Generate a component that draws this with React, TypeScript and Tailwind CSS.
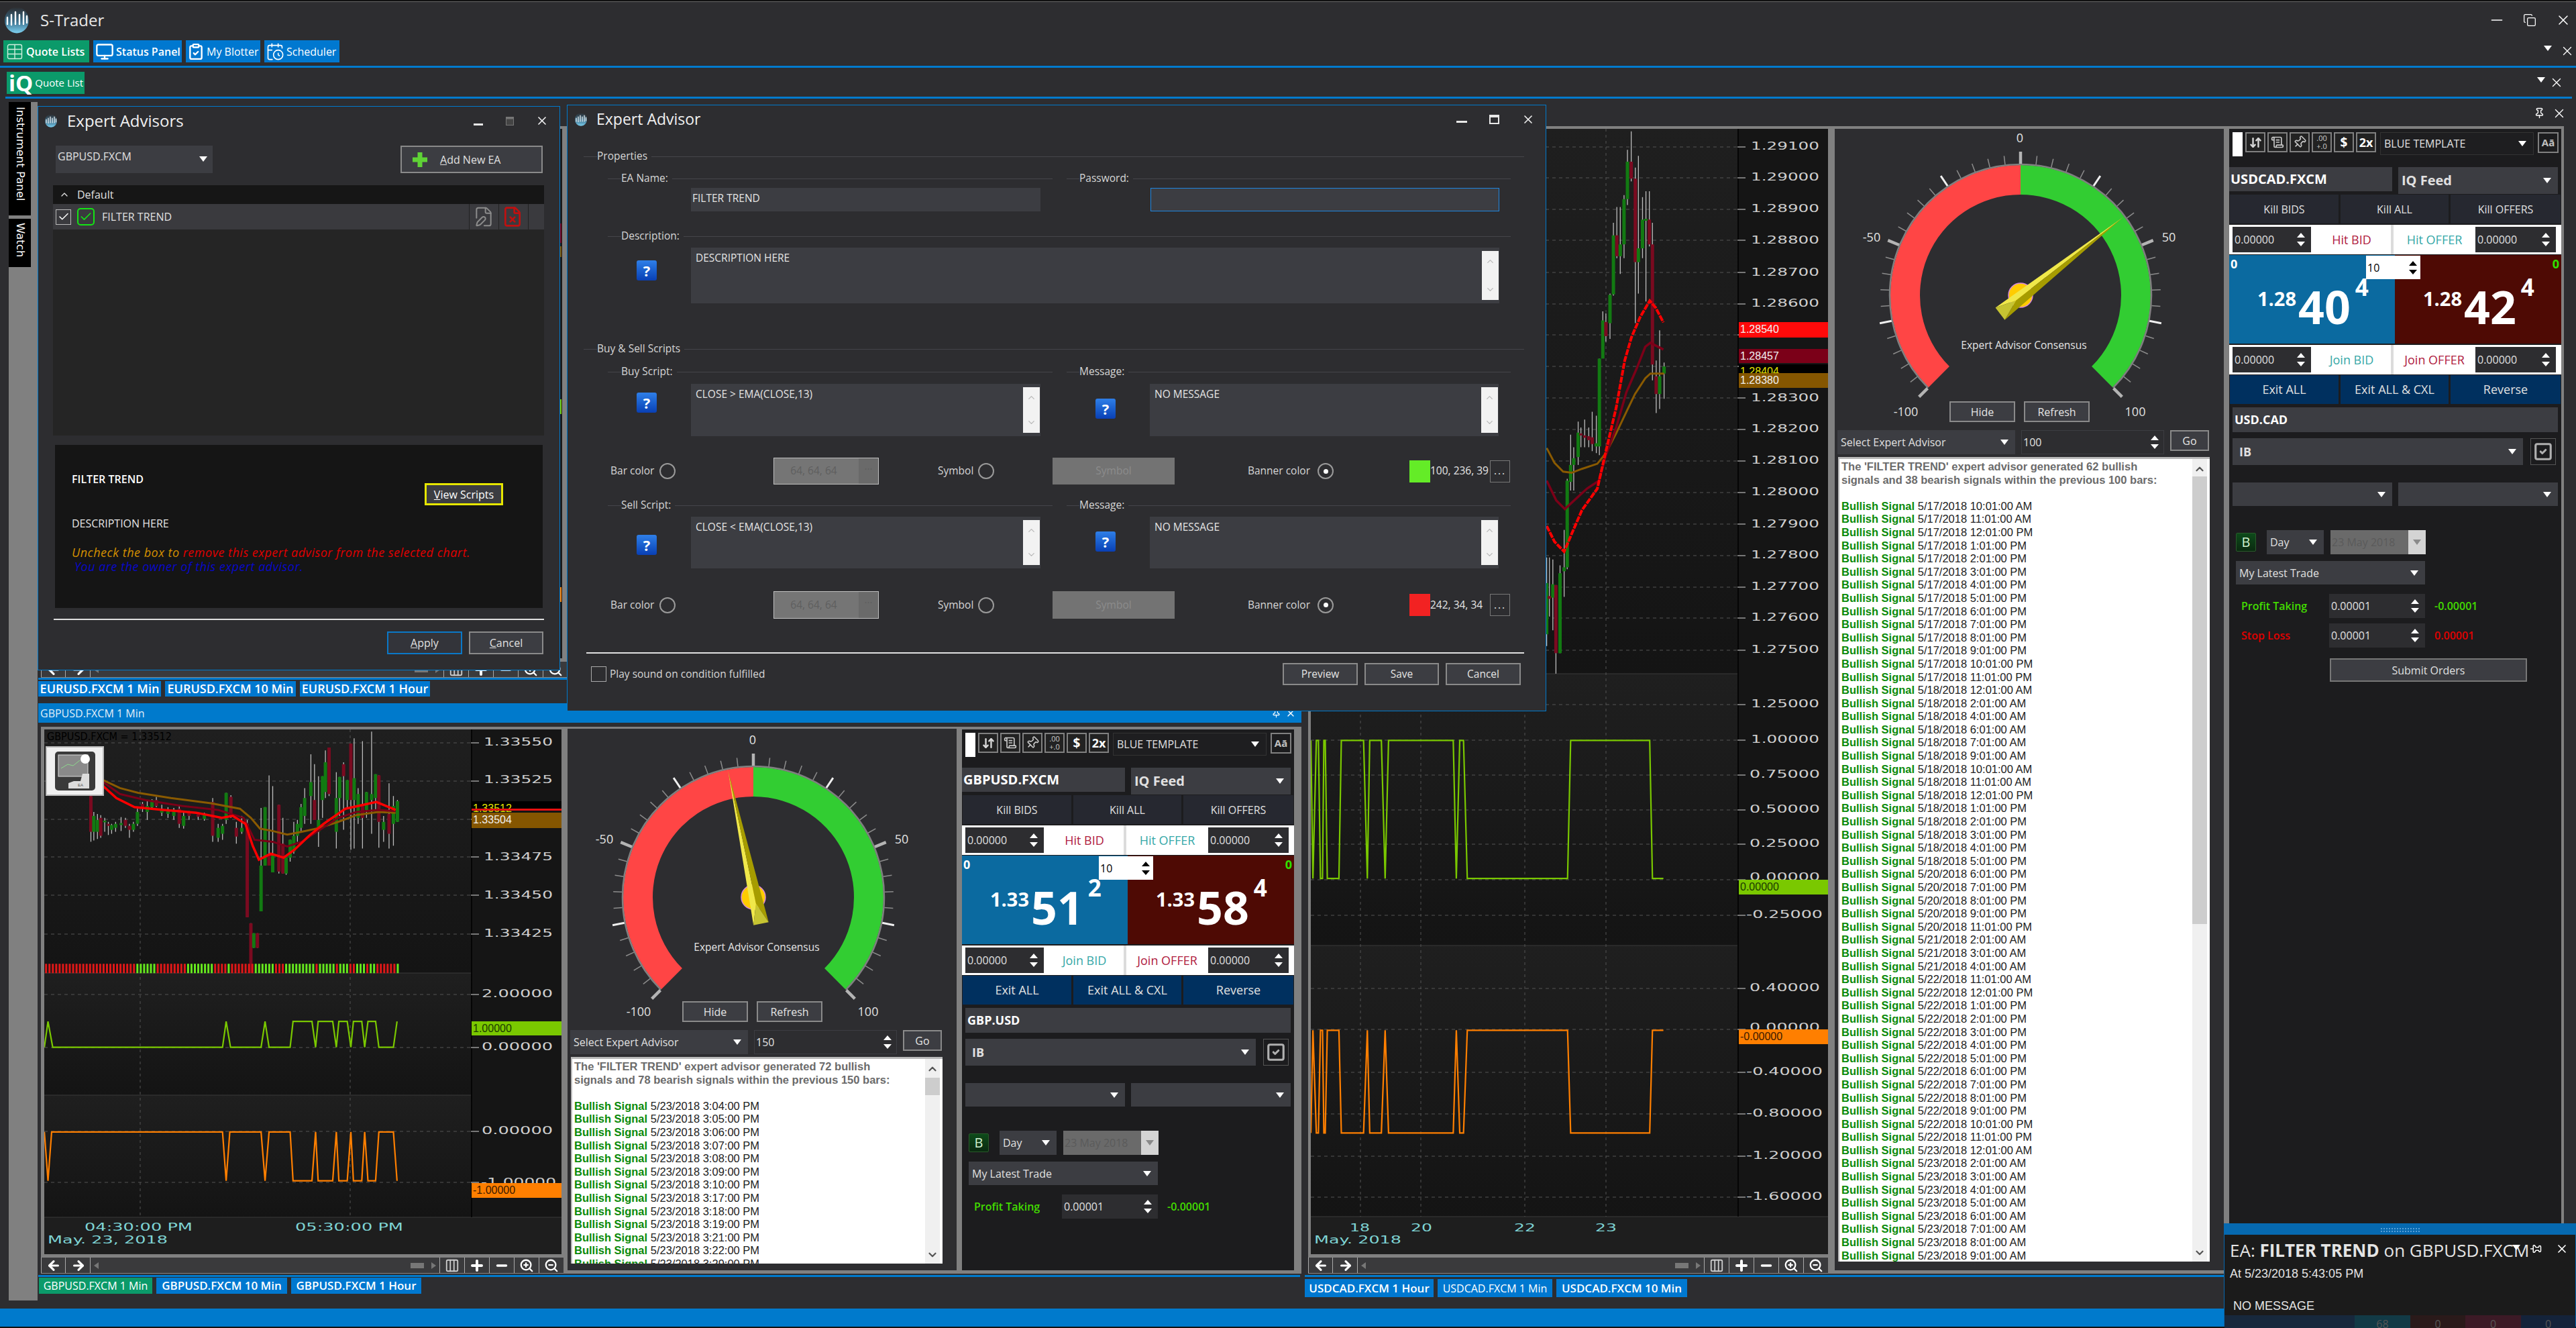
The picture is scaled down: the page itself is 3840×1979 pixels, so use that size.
import React from "react";
import { ArrowLeft, ArrowRight, Plus, Minus, ZoomIn, ZoomOut, Columns3, Table, Monitor, ClipboardCheck, CalendarClock, ArrowDownUp, ScrollText, Pin, FilePen, FileX, Check, ChevronUp, ChevronDown, X, Copy, SquareCheck } from "lucide-react";

type P = [number, number];

const Tri = ({ c = "fill-white" }: { c?: string }) => (
  <svg width="12" height="8" viewBox="0 0 12 8" className={"shrink-0 " + c}><path d="M0 0h12L6 8z" /></svg>
);

const Spin = ({ c = "fill-white" }: { c?: string }) => (
  <svg width="14" height="24" viewBox="0 0 14 24" className={"shrink-0 " + c}><path d="M7 2l6 7H1zM1 15h12l-6 7z" /></svg>
);

const Logo = ({ s }: { s: number }) => (
  <svg width={s} height={s} viewBox="0 0 40 40">
    <defs>
      <linearGradient id="lg" x1="0" y1="0" x2="0" y2="1">
        <stop offset="0" stopColor="#2d2d30" />
        <stop offset="0.55" stopColor="#3a6f8c" />
        <stop offset="1" stopColor="#7fd2f2" />
      </linearGradient>
    </defs>
    <ellipse cx="20" cy="20" rx="18" ry="19.5" fill="url(#lg)" />
    <g stroke="#fff" strokeWidth="2.4" strokeLinecap="round">
      <path d="M6 16v10M12 12v15M18 8v18M24 12v14M30 8v18M35 14v10" />
    </g>
  </svg>
);

const Tab = ({ t, c, icon }: { t: string; c: string; icon?: React.ReactNode }) => (
  <div className={"flex items-center shrink-0 text-white whitespace-nowrap " + c}>
    {icon}
    {t}
  </div>
);

const Help = ({ c }: { c: string }) => (
  <div className={"w-[30px] h-[30px] rounded-[3px] bg-gradient-to-b from-[#2f7fe8] to-[#0a3fb4] flex items-center justify-center text-white font-bold text-[22px] leading-none shrink-0 " + c}>?</div>
);

const Radio = ({ on }: { on?: boolean }) => (
  <div className="w-[24px] h-[24px] rounded-full border-2 border-[#9a9a9a] flex items-center justify-center shrink-0">
    {on ? <div className="w-[7px] h-[7px] rounded-full bg-white" /> : null}
  </div>
);

const Head = ({ t, c, lead = "w-[20px]" }: { t: string; c: string; lead?: string }) => (
  <div className={"flex items-center h-[22px] shrink-0 " + c}>
    <div className={"h-px bg-[#45454a] " + lead} />
    <span className="pr-[6px] text-[#d6d6d6] whitespace-nowrap">{t}</span>
    <div className="flex-1 h-px bg-[#45454a]" />
  </div>
);

const TextScroll = () => (
  <div className="w-[25px] bg-[#f2f2f2] flex flex-col items-center justify-between py-[8px] my-[5px] mr-[1px]">
    <ChevronUp size={15} className="text-[#b8b8b8]" />
    <ChevronDown size={15} className="text-[#b8b8b8]" />
  </div>
);

const ScriptRow = ({ t, c, h1, h2 }: { t: string; c: string; h1: string; h2: string }) => (
  <div className={"flex shrink-0 " + c}>
    <Help c={"ml-[103px] " + h1} />
    <div className="ml-[51px] w-[521px] bg-[#3c3d42] flex justify-between">
      <span className="pl-[7px] pt-[4px] text-[#e4e4e4]">{t}</span>
      <TextScroll />
    </div>
    <Help c={"ml-[82px] " + h2} />
    <div className="ml-[51px] w-[520px] bg-[#3c3d42] flex justify-between">
      <span className="pl-[7px] pt-[4px] text-[#e4e4e4]">NO MESSAGE</span>
      <TextScroll />
    </div>
  </div>
);

const BarRow = ({ c, sw, t }: { c: string; sw: string; t: string }) => (
  <div className={"flex items-center shrink-0 " + c}>
    <span className="ml-[64px] w-[68px] text-[#d6d6d6] whitespace-nowrap">Bar color</span>
    <div className="ml-[5px]"><Radio /></div>
    <div className="ml-[146px] w-[157px] h-full border border-[#c0c0c0] bg-[#757575] flex items-center text-[#5f5f5f]">
      <span className="flex-1 text-center pr-[8px]">64, 64, 64</span>
      <span className="w-[29px] h-full bg-[#6a6a6a] text-center">...</span>
    </div>
    <span className="ml-[88px] w-[56px] text-[#d6d6d6]">Symbol</span>
    <div className="ml-[4px]"><Radio /></div>
    <div className="ml-[87px] w-[182px] h-full bg-[#737373] flex items-center justify-center text-[#8c8c8c]">Symbol</div>
    <span className="ml-[79px] w-[123px] text-right text-[#d6d6d6] whitespace-nowrap">Banner color</span>
    <div className="ml-[11px]"><Radio on /></div>
    <div className={"ml-[113px] w-[31px] h-[33px] " + sw} />
    <span className="w-[89px] text-[#e4e4e4] whitespace-nowrap">{t}</span>
    <div className="w-[30px] h-[33px] border border-[#777] flex items-center justify-center text-[#e4e4e4] tracking-[2px]">...</div>
  </div>
);

const Btn = ({ c, t }: { c: string; t: string }) => (
  <div className={"bg-[#3c3d42] border-2 border-[#8a8a8a] flex items-center justify-center text-[#e4e4e4] shrink-0 " + c}>{t}</div>
);

const Dialog = () => (
  <div className="absolute left-[845px] top-[156px] w-[1460px] h-[904px] bg-[#2d2d30] border border-[#007acc] flex flex-col text-[15.5px]">
    <div className="h-[41px] flex items-center shrink-0">
      <div className="ml-[10px]"><Logo s={20} /></div>
      <span className="ml-[13px] text-[23px] text-[#f0f0f0]">Expert Advisor</span>
      <div className="flex-1" />
      <svg width="16" height="4" className="mr-[33px] mt-[8px]"><rect width="16" height="3" fill="#e8e8e8" /></svg>
      <svg width="15" height="14" className="mr-[33px]"><rect x="1" y="1" width="13" height="12" fill="none" stroke="#e8e8e8" strokeWidth="2" /><rect x="1" y="1" width="13" height="3" fill="#e8e8e8" /></svg>
      <X size={20} className="mr-[16px] text-[#f0f0f0]" />
    </div>
    <Head t="Properties" c="mt-[24px] ml-[24px] w-[1402px]" />
    <div className="flex mt-[11px] shrink-0">
      <Head t="EA Name:" c="ml-[60px] w-[663px]" />
      <Head t="Password:" c="ml-[21px] w-[662px]" lead="w-[19px]" />
    </div>
    <div className="flex mt-[3px] h-[35px] shrink-0">
      <div className="ml-[184px] w-[521px] bg-[#3c3d42] text-[#e4e4e4] pl-[2px] pt-[4px]">FILTER TREND</div>
      <div className="ml-[164px] w-[520px] bg-[#3c3d42] border border-[#1e86e0]" />
    </div>
    <Head t="Description:" c="mt-[26px] ml-[60px] w-[1346px]" />
    <div className="flex mt-[6px] h-[83px] shrink-0">
      <Help c="ml-[103px] mt-[19px]" />
      <div className="ml-[51px] w-[1205px] bg-[#3c3d42] flex justify-between">
        <span className="pl-[7px] pt-[4px] text-[#e4e4e4]">DESCRIPTION HERE</span>
        <TextScroll />
      </div>
    </div>
    <Head t="Buy & Sell Scripts" c="mt-[57px] ml-[24px] w-[1402px]" />
    <div className="flex mt-[12px] shrink-0">
      <Head t="Buy Script:" c="ml-[60px] w-[663px]" />
      <Head t="Message:" c="ml-[21px] w-[662px]" lead="w-[19px]" />
    </div>
    <ScriptRow t="CLOSE > EMA(CLOSE,13)" c="mt-[7px] h-[78px]" h1="mt-[13px]" h2="mt-[22px]" />
    <BarRow c="mt-[32px] h-[40px]" sw="bg-[#64ec27]" t="100, 236, 39" />
    <div className="flex mt-[20px] shrink-0">
      <Head t="Sell Script:" c="ml-[60px] w-[663px]" />
      <Head t="Message:" c="ml-[21px] w-[662px]" lead="w-[19px]" />
    </div>
    <ScriptRow t="CLOSE < EMA(CLOSE,13)" c="mt-[6px] h-[77px]" h1="mt-[27px]" h2="mt-[22px]" />
    <BarRow c="mt-[34px] h-[41px]" sw="bg-[#f22222]" t="242, 34, 34" />
    <div className="mt-[50px] ml-[28px] w-[1398px] h-[2px] bg-[#e0e0e0] shrink-0" />
    <div className="flex items-center mt-[14px] h-[33px] shrink-0">
      <div className="ml-[35px] w-[23px] h-[23px] border border-[#aaa]" />
      <span className="ml-[5px] text-[#d6d6d6]">Play sound on condition fulfilled</span>
      <div className="flex-1" />
      <Btn c="w-[112px] h-[33px]" t="Preview" />
      <Btn c="ml-[10px] w-[111px] h-[33px]" t="Save" />
      <Btn c="ml-[10px] mr-[37px] w-[112px] h-[33px]" t="Cancel" />
    </div>
  </div>
);

const Advisors = () => (
  <div className="absolute left-[56px] top-[158px] w-[779px] h-[841px] bg-[#2d2d30] border border-[#007acc] flex flex-col text-[16px] text-[#e0e0e0]">
    <div className="h-[42px] flex items-center shrink-0">
      <div className="ml-[9px]"><Logo s={20} /></div>
      <span className="ml-[14px] text-[24px] text-[#f0f0f0]">Expert Advisors</span>
      <div className="flex-1" />
      <svg width="14" height="4" className="mr-[34px] mt-[12px]"><rect width="14" height="3" fill="#e8e8e8" /></svg>
      <svg width="12" height="13" className="mr-[32px]"><rect x="0.5" y="0.5" width="11" height="12" fill="#444" stroke="#777" /><rect x="0.5" y="0.5" width="11" height="3" fill="#777" /></svg>
      <X size={20} className="mr-[16px] text-[#f0f0f0]" />
    </div>
    <div className="flex mt-[16px] h-[41px] shrink-0">
      <div className="ml-[26px] w-[234px] bg-[#3c3d42] flex justify-between px-[3px] pt-[4px] pr-[8px]">
        <span>GBPUSD.FXCM</span>
        <div className="mt-[12px]"><Tri /></div>
      </div>
      <div className="ml-[280px] w-[212px] border-2 border-[#8a8a8a] bg-[#3c3d42] flex items-center">
        <svg width="22" height="22" viewBox="0 0 22 22" className="ml-[16px]"><path d="M7.5 0h7v7.5H22v7h-7.5V22h-7v-7.5H0v-7h7.5z" fill="#5fd236" /></svg>
        <span className="ml-[19px]"><span className="underline">A</span>dd New EA</span>
      </div>
    </div>
    <div className="mt-[18px] ml-[22px] w-[732px] h-[373px] bg-[#252525] flex flex-col shrink-0">
      <div className="h-[28px] bg-[#161616] flex items-center">
        <ChevronUp size={16} className="ml-[9px]" />
        <span className="ml-[11px]">Default</span>
      </div>
      <div className="h-[38px] bg-[#3a3a3e] flex items-center">
        <div className="ml-[4px] w-[23px] h-[23px] border border-[#bbb] flex items-center justify-center"><Check size={18} className="text-white" /></div>
        <div className="ml-[9px] w-[26px] h-[26px] rounded-[5px] border-2 border-[#14e414] flex items-center justify-center"><Check size={20} className="text-[#14e414]" /></div>
        <span className="ml-[11px]">FILTER TREND</span>
        <div className="flex-1" />
        <div className="h-full w-px bg-[#222]" />
        <FilePen size={32} strokeWidth={1.5} className="ml-[5px] text-[#8c8c8c]" />
        <div className="ml-[6px] h-full w-px bg-[#222]" />
        <FileX size={32} strokeWidth={2} className="ml-[4px] text-[#c01010]" />
        <div className="ml-[7px] h-full w-px bg-[#222] mr-[23px]" />
      </div>
    </div>
    <div className="mt-[14px] ml-[25px] w-[727px] h-[243px] bg-[#151515] flex flex-col shrink-0 relative">
      <div className="ml-[25px] mt-[39px] font-semibold text-white">FILTER TREND</div>
      <div className="absolute left-[551px] top-[57px] w-[117px] h-[33px] border-[3px] border-[#e6e600] bg-[#3c3d42] flex items-center justify-center text-white"><span><span className="underline">V</span>iew Scripts</span></div>
      <div className="ml-[25px] mt-[42px] text-[#e4e4e4]">DESCRIPTION HERE</div>
      <div className="ml-[25px] mt-[21px] italic whitespace-nowrap text-[18px] tracking-[0.5px] leading-[21px]"><span className="text-[#d49000]">Uncheck the box to </span><span className="text-[#e00000]">remove this expert advisor from the  selected chart.</span></div>
      <div className="ml-[29px] italic text-[#0808c8] whitespace-nowrap text-[18px] tracking-[0.5px] leading-[21px]">You are the owner of this expert advisor.</div>
    </div>
    <div className="mt-[16px] ml-[23px] w-[731px] h-[2px] bg-[#e0e0e0] shrink-0" />
    <div className="flex mt-[17px] h-[34px] shrink-0">
      <div className="ml-[520px] w-[112px] border-2 border-[#0a78c8] bg-[#33343a] flex items-center justify-center"><span><span className="underline">A</span>pply</span></div>
      <div className="ml-[10px] w-[111px] border-2 border-[#8a8a8a] bg-[#3c3d42] flex items-center justify-center"><span><span className="underline">C</span>ancel</span></div>
    </div>
  </div>
);

const build = (date: string, list: string) =>
  list.split(" ").map((s) => date + " " + s.slice(0, -1) + ":01:00 " + s.slice(-1) + "M");
const RIGHT_SIGNALS = [
  ...build("5/17/2018", "10A 11A 12P 1P 2P 3P 4P 5P 6P 7P 8P 9P 10P 11P"),
  ...build("5/18/2018", "12A 2A 4A 6A 7A 9A 10A 11A 12P 1P 2P 3P 4P 5P"),
  ...build("5/20/2018", "6P 7P 8P 9P 11P"),
  ...build("5/21/2018", "2A 3A 4A"),
  ...build("5/22/2018", "11A 12P 1P 2P 3P 4P 5P 6P 7P 8P 9P 10P 11P"),
  ...build("5/23/2018", "12A 2A 3A 4A 5A 6A 7A 8A 9A 10A"),
];
const LEFT_SIGNALS = ["3:04", "3:05", "3:06", "3:07", "3:08", "3:09", "3:10", "3:17", "3:18", "3:19", "3:21", "3:22", "3:29"].map(
  (t) => "5/23/2018 " + t + ":00 PM"
);

const SignalBox = ({ c, l1, l2, rows, thumb }: { c: string; l1: string; l2: string; rows: string[]; thumb: string }) => (
  <div className={"mt-[4px] ml-[5px] w-[554px] bg-white border-t-[3px] border-l-[2px] border-[#b8b8b8] flex overflow-hidden shrink-0 " + c}>
    <div className="flex-1 overflow-hidden pt-[2px] pl-[3px] font-['Liberation_Sans',sans-serif] text-[16.5px] leading-[19.6px] text-[#222] whitespace-nowrap">
      <div className="font-bold text-[#6b6b6b]">{l1}</div>
      <div className="font-bold text-[#6b6b6b]">{l2}</div>
      <div className="h-[19.6px]" />
      {rows.map((r, i) => (
        <div key={i}>
          <span className="font-bold text-[#0a8a0a]">Bullish Signal</span> {r}
        </div>
      ))}
    </div>
    <div className="w-[22px] mr-[4px] bg-[#f0f0f0] flex flex-col items-center shrink-0">
      <ChevronUp size={18} strokeWidth={3} className="text-[#555] mt-[6px]" />
      <div className={"w-full bg-[#cdcdcd] mt-[2px] " + thumb} />
      <div className="flex-1" />
      <ChevronDown size={18} strokeWidth={3} className="text-[#555] mb-[4px]" />
    </div>
  </div>
);

const Gauge = ({ c, angle, cy, v, l1, l2, rows, boxH, thumb }: { c: string; angle: number; cy: number; v: string; l1: string; l2: string; rows: string[]; boxH: string; thumb: string }) => {
  const cx = 277;
  const pol = (a: number, r: number): P => [cx + r * Math.sin((a * Math.PI) / 180), cy - r * Math.cos((a * Math.PI) / 180)];
  const sector = (a0: number, a1: number) => {
    const r1 = 194;
    const r0 = 150;
    const large = Math.abs(a1 - a0) > 180 ? 1 : 0;
    const A = pol(a0, r1), B = pol(a1, r1), C = pol(a1, r0), D = pol(a0, r0);
    return `M${A[0]} ${A[1]}A${r1} ${r1} 0 ${large} 1 ${B[0]} ${B[1]}L${C[0]} ${C[1]}A${r0} ${r0} 0 ${large} 0 ${D[0]} ${D[1]}Z`;
  };
  const ticks = [];
  for (let i = 0; i <= 40; i++) {
    const a = -135 + i * 6.75;
    const major = i % 5 === 0;
    const big = i % 10 === 0;
    const p0 = pol(a, 196);
    const p1 = pol(a, major ? 214 : 209);
    ticks.push(<line key={i} x1={p0[0]} y1={p0[1]} x2={p1[0]} y2={p1[1]} stroke={big ? "#b4b4b4" : major ? "#f0f0f0" : "#8c8c8c"} strokeWidth={big ? 4.5 : major ? 3 : 1.5} />);
  }
  const L = (along: number, perp: number): string => {
    const r = (angle * Math.PI) / 180;
    const ux = Math.sin(r), uy = -Math.cos(r), vx = Math.cos(r), vy = Math.sin(r);
    return `${cx + along * ux + perp * vx},${cy + along * uy + perp * vy}`;
  };
  const tip = L(192, 0), p1 = L(-41, -8), p2 = L(-41, 15), m = L(-10, 2);
  return (
    <div className={"w-[580px] bg-[#2d2d30] flex flex-col text-[16px] text-[#e0e0e0] shrink-0 " + c}>
      <svg width="578" height="406" className="shrink-0">
        <path d={sector(-135, 0)} fill="#ff4545" />
        <path d={sector(0, 135)} fill="#32cd32" />
        <path d={`M${pol(-135, 195)[0]} ${pol(-135, 195)[1]}A195 195 0 1 1 ${pol(135, 195)[0]} ${pol(135, 195)[1]}`} fill="none" stroke="#808080" strokeWidth="2.5" />
        {ticks}
        <text x={cx - 1} y={cy - 228} textAnchor="middle" fontSize="18" fill="#e4e4e4" fontFamily="Open Sans">0</text>
        <text x={cx - 222} y={cy - 80} textAnchor="middle" fontSize="18" fill="#e4e4e4" fontFamily="Open Sans">-50</text>
        <text x={cx + 221} y={cy - 80} textAnchor="middle" fontSize="18" fill="#e4e4e4" fontFamily="Open Sans">50</text>
        <text x={cx + 5} y={cy + 80} textAnchor="middle" fontSize="15.5" fill="#e4e4e4" fontFamily="Open Sans">Expert Advisor Consensus</text>
        <circle cx={cx} cy={cy} r="18" fill="#ffcc00" stroke="#d88ad8" strokeWidth="1.5" />
        <polygon points={`${tip} ${p1} ${m}`} fill="#f0e84a" />
        <polygon points={`${tip} ${m} ${p2}`} fill="#a69c00" />
        <polygon points={`${p1} ${p2} ${m}`} fill="#c6c432" />
      </svg>
      <div className="flex items-center h-[31px] shrink-0">
        <span className="ml-[76px] w-[60px] text-center text-[18px]">-100</span>
        <Btn c="ml-[35px] w-[98px] h-[31px]" t="Hide" />
        <Btn c="ml-[13px] w-[98px] h-[31px]" t="Refresh" />
        <span className="ml-[38px] w-[60px] text-center text-[18px]">100</span>
      </div>
      <div className="flex items-start h-[36px] mt-[12px] shrink-0 ">
        <div className="ml-[4px] w-[265px] h-full bg-[#3c3d42] flex items-center justify-between pl-[5px] pr-[10px] whitespace-nowrap"><span>Select Expert Advisor</span><Tri /></div>
        <div className="ml-[9px] w-[213px] h-full border border-[#3c3d42] flex items-center justify-between pl-[2px] pr-[6px]"><span>{v}</span><Spin /></div>
        <Btn c="ml-[9px] w-[58px] h-[31px]" t="Go" />
      </div>
      <SignalBox c={boxH} l1={l1} l2={l2} rows={rows} thumb={thumb} />
    </div>
  );
};

const ToolBtn = ({ children, c }: { children: React.ReactNode; c?: string }) => (
  <div className={"w-[30px] h-[30px] border-2 border-[#808080] bg-[#222] flex items-center justify-center text-white font-bold " + (c || "")}>{children}</div>
);

const Combo = ({ t, c, tc }: { t: string; c: string; tc?: string }) => (
  <div className={"bg-[#3c3d42] flex items-center justify-between pl-[5px] pr-[10px] whitespace-nowrap shrink-0 " + c}>
    <span className={tc}>{t}</span>
    <Tri />
  </div>
);

const SpinBox = ({ c, v }: { c: string; v: string }) => (
  <div className={"bg-[#2d2d30] flex items-center justify-between pl-[3px] pr-[8px] text-[#e0e0e0] shrink-0 " + c}>
    <span>{v}</span>
    <Spin />
  </div>
);

const Price = ({ a, b, d, c }: { a: string; b: string; d: string; c: string }) => (
  <div className={"h-full flex items-start font-bold text-white leading-none " + c}>
    <span className="ml-[42px] mt-[50px] text-[29px]">{a}</span>
    <span className="ml-[3px] mt-[43px] text-[68px]">{b}</span>
    <span className="ml-[7px] mt-[30px] text-[35px]">{d}</span>
  </div>
);

const WhiteRow = ({ a, b, ac, bc }: { a: string; b: string; ac: string; bc: string }) => (
  <div className="h-[44px] bg-white flex items-center pl-[5px] shrink-0 text-[18px]">
    <SpinBox c="w-[117px] h-[38px] text-[16px]" v="0.00000" />
    <div className={"w-[121px] ml-[2px] text-center border-r-[4px] border-[#dcdcdc] h-full flex items-center justify-center " + ac}>{a}</div>
    <div className={"w-[120px] ml-[1px] text-center h-full flex items-center justify-center " + bc}>{b}</div>
    <SpinBox c="w-[120px] ml-[1px] h-[38px] text-[16px]" v="0.00000" />
  </div>
);

const BoxBtn = ({ c, t }: { c: string; t: string }) => (
  <div className={"h-full flex items-center justify-center shrink-0 " + c}>{t}</div>
);

const Trade = ({ s1, s2, a, b1, d1, b2, d2, stop, c }: { s1: string; s2: string; a: string; b1: string; d1: string; b2: string; d2: string; stop?: boolean; c: string }) => (
  <div className={"w-[495px] bg-[#1c1c1e] flex flex-col text-[16px] text-[#e0e0e0] shrink-0 " + c}>
    <div className="h-[57px] flex items-start pt-[5px] shrink-0">
      <div className="ml-[5px] w-[15px] h-[36px] bg-white" />
      <div className="ml-[4px] flex gap-[3px]">
        <ToolBtn><ArrowDownUp size={19} strokeWidth={3} className="text-[#d8d8d8]" /></ToolBtn>
        <ToolBtn><ScrollText size={20} className="text-[#c8c8c8]" /></ToolBtn>
        <ToolBtn><Pin size={20} className="rotate-45 text-[#c8c8c8]" /></ToolBtn>
        <ToolBtn><span className="text-[11px] leading-[12px] text-center font-normal text-[#ccc]">.00<br />+.0</span></ToolBtn>
        <ToolBtn c="text-[19px]">$</ToolBtn>
        <ToolBtn c="text-[18px]">2x</ToolBtn>
      </div>
      <div className="ml-[6px] w-[229px] h-[34px] bg-[#1e1e20] border border-[#333] flex items-center justify-between pl-[5px] pr-[10px]"><span>BLUE TEMPLATE</span><Tri /></div>
      <div className="ml-[6px] w-[31px] h-[31px] border-2 border-[#808080] flex items-center justify-center text-[#c0c0c0] font-bold text-[15px]">Aā</div>
    </div>
    <div className="h-[41px] flex items-start shrink-0 text-[20px] font-bold">
      <div className="w-[243px] h-[36px] bg-[#3c3d42] flex items-center pl-[2px] text-white">{s1}</div>
      <Combo t="IQ Feed" c="ml-[9px] w-[238px] h-[40px] pl-[5px]" />
    </div>
    <div className="h-[43px] flex gap-[3px] pl-[1px] shrink-0 ">
      <BoxBtn c="w-[162px] bg-[#262830]" t="Kill BIDS" />
      <BoxBtn c="w-[161px] bg-[#262830]" t="Kill ALL" />
      <BoxBtn c="w-[164px] bg-[#262830]" t="Kill OFFERS" />
    </div>
    <div className="h-[2px] shrink-0" />
    <WhiteRow a="Hit BID" b="Hit OFFER" ac="text-[#b02040]" bc="text-[#36a8a8]" />
    <div className="h-[1px] shrink-0" />
    <div className="h-[132px] flex relative shrink-0">
      <Price a={a} b={b1} d={d1} c="w-[247px] bg-[#0b6aa0]" />
      <Price a={a} b={b2} d={d2} c="w-[248px] bg-[#4e0a04]" />
      <span className="absolute left-[2px] top-[0px] font-bold text-white text-[18px]">0</span>
      <span className="absolute right-[3px] top-[0px] font-bold text-[#30e000] text-[18px]">0</span>
      <div className="absolute left-[204px] top-[1px] w-[81px] h-[35px] bg-white text-black flex items-center justify-between px-[2px] pr-[4px]"><span>10</span><Spin c="fill-black" /></div>
    </div>
    <div className="h-[2px] shrink-0" />
    <WhiteRow a="Join BID" b="Join OFFER" ac="text-[#36a8a8]" bc="text-[#b02040]" />
    <div className="h-[1px] shrink-0" />
    <div className="h-[43px] flex gap-[3px] pl-[1px] shrink-0 text-[18px]">
      <BoxBtn c="w-[162px] bg-[#00305f]" t="Exit ALL" />
      <BoxBtn c="w-[161px] bg-[#00305f]" t="Exit ALL & CXL" />
      <BoxBtn c="w-[164px] bg-[#00305f]" t="Reverse" />
    </div>
    <div className="mt-[5px] ml-[5px] w-[485px] h-[37px] bg-[#3c3d42] flex items-center pl-[3px] font-bold text-[18px] text-white shrink-0">{s2}</div>
    <div className="mt-[9px] flex h-[40px] shrink-0 font-bold text-[18px]">
      <Combo t="IB" c="ml-[5px] w-[433px] h-full pl-[10px]" />
      <div className="ml-[11px] w-[38px] h-full border border-[#555] flex items-center justify-center"><SquareCheck size={30} strokeWidth={2.5} className="text-[#b0b0b0]" /></div>
    </div>
    <div className="mt-[26px] flex h-[35px] shrink-0">
      <Combo t="" c="ml-[5px] w-[238px] h-full" />
      <Combo t="" c="ml-[9px] w-[238px] h-full" />
    </div>
    <div className="mt-[36px] flex items-center h-[36px] shrink-0">
      <div className="ml-[10px] w-[30px] h-[28px] rounded-[2px] bg-gradient-to-b from-[#0d4a1a] to-[#0a2a10] border border-[#2a5a2a] flex items-center justify-center text-[#d0f0d0] text-[20px]">B</div>
      <Combo t="Day" c="ml-[16px] w-[85px] h-full" />
      <div className="ml-[10px] w-[142px] h-full bg-[#6a6a6a] flex items-center">
        <span className="flex-1 pl-[2px] text-[#5a5a5a] whitespace-nowrap">23 May 2018</span>
        <div className="w-[26px] h-full bg-[#d4d4d4] flex items-center justify-center"><Tri c="fill-[#8a8a8a]" /></div>
      </div>
    </div>
    <Combo t="My Latest Trade" c="mt-[10px] ml-[10px] w-[282px] h-[35px]" />
    <div className="mt-[14px] flex items-center h-[36px] shrink-0 font-semibold">
      <span className="ml-[18px] w-[131px] text-[#42dc00]">Profit Taking</span>
      <SpinBox c="w-[143px] h-full font-normal" v="0.00001" />
      <span className="ml-[14px] text-[#42dc00]">-0.00001</span>
    </div>
    {stop ? (
      <>
        <div className="mt-[8px] flex items-center h-[36px] shrink-0 font-semibold">
          <span className="ml-[18px] w-[131px] text-[#e00000]">Stop Loss</span>
          <SpinBox c="w-[143px] h-full font-normal" v="0.00001" />
          <span className="ml-[14px] text-[#e00000]">0.00001</span>
        </div>
        <div className="mt-[16px] ml-[150px] w-[294px] h-[35px] bg-[#3c3d42] border-2 border-[#777] flex items-center justify-center shrink-0">Submit Orders</div>
      </>
    ) : null}
  </div>
);

const ChartBar = ({ c }: { c: string }) => (
  <div className={"h-[25px] bg-[#3a3a3c] border-y border-[#888] flex items-stretch text-white shrink-0 " + c}>
    <div className="w-[37px] border-x border-[#aaa] flex items-center justify-center"><ArrowLeft size={22} strokeWidth={3.5} /></div>
    <div className="w-[36px] ml-[1px] border-r border-[#aaa] flex items-center justify-center"><ArrowRight size={22} strokeWidth={3.5} /></div>
    <div className="flex-1 flex items-center justify-between px-[5px]">
      <svg width="7" height="10"><path d="M7 0v10L0 5z" fill="#777" /></svg>
      <div className="flex-1" />
      <div className="w-[20px] h-[8px] bg-[#777] mr-[11px]" />
      <svg width="7" height="10"><path d="M0 0v10l7-5z" fill="#777" /></svg>
    </div>
    <div className="flex">
      {[<Columns3 key="a" size={22} strokeWidth={2} className="text-[#ccc]" />, <Plus key="b" size={24} strokeWidth={4} />, <Minus key="c" size={22} strokeWidth={4} />, <ZoomIn key="d" size={22} strokeWidth={2.5} />, <ZoomOut key="e" size={22} strokeWidth={2.5} />].map((ic, i) => (
        <div key={i} className="w-[37px] border-l border-[#aaa] flex items-center justify-center">{ic}</div>
      ))}
    </div>
  </div>
);

const Ax = ({ x, y, w, t, fill = "#cfcfcf" }: { x: number; y: number; w: number; t: string; fill?: string }) => (
  <text x={x} y={y + 5.5} fontFamily="DejaVu Sans" fontSize={15} textLength={w} lengthAdjust="spacingAndGlyphs" fill={fill}>{t}</text>
);

const Flag = ({ x, y0, y1, w, bg, t, fg = "#f0f0f0" }: { x: number; y0: number; y1: number; w: number; bg: string; t: string; fg?: string }) => (
  <g>
    <rect x={x} y={y0} width={w} height={y1 - y0} fill={bg} />
    <text x={x + 2} y={y0 + 16} fontFamily="Liberation Sans" fontSize="16" fill={fg}>{t}</text>
  </g>
);

const HGrid = ({ ys, w }: { ys: number[]; w: number }) => (
  <>
    {ys.map((y, i) => (
      <g key={i}>
        <line x1={0} x2={w} y1={y} y2={y} stroke="#555" strokeWidth="1" strokeDasharray="5 5" />
        <line x1={w} x2={w + 12} y1={y} y2={y} stroke="#999" strokeWidth="1.5" />
      </g>
    ))}
  </>
);

const poly = (l: P[]) => l.map((p) => p[0] + "," + p[1]).join(" ");

type Cd = [number, number, number, number, number, number];

const Candles = ({ d, fx, fy }: { d: Cd[]; fx: (n: number) => number; fy: (n: number) => number }) => (
  <>
    {d.map((k, i) => (
      <g key={i}>
        <line x1={fx(k[0])} x2={fx(k[0])} y1={fy(k[1])} y2={fy(k[2])} stroke="#bdbdbd" strokeWidth="1.3" />
        <rect x={fx(k[0]) - 2.5} width={5} y={fy(k[3])} height={Math.max(2, fy(k[4]) - fy(k[3]))} fill={k[5] ? "#127a12" : "#7a0a20"} />
      </g>
    ))}
  </>
);

const LC: Cd[] = [
  [250, 110, 345, 230, 320, 0], [258, 270, 342, 280, 320, 1], [268, 275, 338, 290, 320, 1], [277, 278, 335, 285, 330, 0], [288, 285, 320, 292, 296, 1], [298, 295, 328, 300, 305, 0], [307, 300, 325, 303, 315, 1], [318, 295, 320, 300, 310, 1], [333, 283, 318, 298, 303, 1], [345, 285, 310, 290, 305, 0], [356, 300, 335, 305, 315, 0], [367, 295, 320, 300, 315, 1], [378, 262, 305, 270, 300, 1], [392, 245, 270, 250, 262, 0], [405, 240, 290, 255, 270, 1], [418, 238, 265, 240, 258, 1], [430, 232, 258, 240, 255, 0], [445, 252, 280, 262, 272, 1], [462, 258, 285, 265, 275, 1], [478, 260, 290, 265, 280, 1], [493, 255, 310, 262, 300, 0], [505, 270, 312, 280, 305, 1], [520, 268, 290, 272, 280, 0], [545, 270, 290, 275, 282, 0], [562, 272, 292, 278, 288, 1], [585, 235, 345, 245, 330, 0], [600, 300, 345, 310, 335, 1], [612, 300, 340, 305, 325, 1], [622, 222, 300, 222, 290, 1], [635, 228, 285, 232, 280, 0], [650, 295, 350, 310, 332, 0], [665, 280, 325, 310, 320, 1], [680, 290, 535, 300, 535, 0], [690, 550, 675, 550, 675, 0], [698, 575, 612, 575, 612, 1], [708, 575, 612, 575, 612, 0], [718, 260, 520, 405, 520, 1], [729, 258, 405, 258, 405, 1], [740, 178, 375, 375, 405, 0], [750, 205, 420, 380, 422, 1], [767, 252, 425, 252, 420, 0], [778, 285, 425, 350, 425, 0], [787, 385, 428, 385, 425, 1], [798, 340, 395, 340, 385, 1], [808, 295, 375, 330, 370, 1], [818, 290, 345, 300, 330, 1], [828, 250, 320, 258, 310, 1], [838, 210, 300, 235, 280, 1], [855, 125, 300, 195, 230, 1], [865, 150, 260, 240, 290, 0], [876, 180, 358, 290, 320, 1], [887, 180, 285, 180, 240, 1], [895, 115, 235, 145, 220, 1], [905, 108, 230, 108, 225, 0], [925, 170, 362, 235, 320, 1], [934, 182, 280, 182, 235, 1], [945, 145, 315, 150, 180, 0], [955, 190, 260, 190, 240, 1], [965, 98, 365, 98, 240, 0], [974, 85, 362, 185, 240, 1], [985, 210, 300, 225, 285, 1], [997, 92, 362, 255, 285, 0], [1008, 220, 285, 220, 265, 1], [1022, 68, 325, 225, 240, 1], [1033, 175, 265, 175, 235, 1], [1042, 178, 360, 178, 295, 0], [1055, 280, 345, 295, 315, 1], [1070, 198, 362, 275, 325, 0], [1082, 230, 355, 255, 300, 1], [1093, 240, 295, 243, 295, 1],
];

const LeftChart = () => {
  const fx = (z: number) => z / 1.845 - 66;
  const fy = (z: number) => z / 1.688 - 37;
  const m = (l: P[]) => poly(l.map((p) => [fx(p[0]), fy(p[1])] as P));
  const bars = [];
  const greens = [[370, 430], [510, 580], [620, 635], [700, 750], [780, 860], [870, 920], [925, 955], [975, 1005], [1010, 1035], [1085, 1098]];
  for (let z = 124; z < 1095; z += 9.3) {
    const g = greens.some((r) => z >= r[0] && z <= r[1]);
    bars.push(<rect key={z} x={fx(z)} y={fy(652)} width={3} height={14} fill={g ? "#66e81e" : "#e01818"} />);
  }
  const w = 636;
  return (
    <svg width="771" height="782" className="block">
      <defs>
        <linearGradient id="pl" x1="0" y1="0" x2="0" y2="1"><stop offset="0" stopColor="#1f1f1f" /><stop offset="1" stopColor="#141414" /></linearGradient>
      </defs>
      <rect width="771" height="782" fill="#1e1e1e" />
      <rect width={w} height="363" fill="url(#pl)" />
      <rect y="363" width={w} height="182" fill="url(#pl)" />
      <rect y="545" width={w} height="182" fill="url(#pl)" />
      <rect x={w} width="135" height="727" fill="#151515" />
      <line x1="0" x2={w} y1="363" y2="363" stroke="#3a3a3a" />
      <line x1="0" x2={w} y1="545" y2="545" stroke="#3a3a3a" />
      <line x1="0" x2="771" y1="727" y2="727" stroke="#3a3a3a" />
      <line x1={w + 1} x2={w + 1} y1="0" y2="727" stroke="#000" strokeWidth="1.5" />
      <HGrid ys={[1107, 1164, 1221, 1277, 1334, 1392, 1482, 1561, 1686, 1762].map((y) => y - 1087)} w={w} />
      {[209, 522].map((x) => (
        <line key={x} x1={x - 66} x2={x - 66} y1="0" y2="727" stroke="#555" strokeDasharray="4 5" />
      ))}
      {[["1.33550", 1105], ["1.33525", 1161], ["1.33475", 1276], ["1.33450", 1333], ["1.33425", 1390], ["2.00000", 1480], ["0.00000", 1559], ["0.00000", 1684], ["-1.00000", 1761]].map((a, i) => (
        <Ax key={i} x={i === 8 ? 651 : i >= 5 ? 652 : 655} y={(a[1] as number) - 1087} w={i === 8 ? 112 : i >= 5 ? 106 : 103} t={a[0] as string} />
      ))}
      <text x="4" y="16" fontFamily="DejaVu Sans" fontSize="15" fill="#000" textLength="186" lengthAdjust="spacingAndGlyphs">GBPUSD.FXCM = 1.33512</text>
      <Candles d={LC} fx={fx} fy={fy} />
      {bars}
      <polyline points={m([[284, 190], [330, 210], [380, 222], [470, 235], [580, 248], [660, 262], [690, 285], [715, 312], [750, 318], [790, 327], [830, 320], [880, 310], [930, 295], [980, 278], [1040, 270], [1088, 272]])} fill="none" stroke="#8a5a00" strokeWidth="3" />
      <polyline points={m([[284, 195], [330, 225], [400, 240], [500, 255], [600, 265], [670, 285], [700, 340], [750, 345], [790, 357], [830, 345], [880, 315], [930, 285], [980, 270], [1040, 265], [1088, 268]])} fill="none" stroke="#7b0018" strokeWidth="3" />
      <polyline points={m([[284, 205], [320, 235], [370, 258], [450, 265], [540, 272], [610, 285], [640, 280], [675, 300], [695, 355], [712, 390], [745, 375], [780, 385], [810, 365], [850, 330], [890, 300], [950, 262], [1000, 252], [1035, 245], [1088, 265]])} fill="none" stroke="#ff0000" strokeWidth="3.5" />
      <polyline points={m([[122, 862], [132, 797], [145, 862], [612, 862], [622, 797], [634, 862], [718, 862], [729, 797], [740, 862], [798, 862], [806, 797], [858, 797], [868, 862], [875, 797], [915, 797], [925, 862], [932, 797], [955, 797], [965, 862], [972, 797], [995, 797], [1003, 862], [1012, 797], [1033, 797], [1042, 862], [1082, 862], [1092, 797]])} fill="none" stroke="#7ac800" strokeWidth="2.2" />
      <polyline points={m([[122, 1075], [132, 1198], [142, 1075], [612, 1075], [622, 1198], [632, 1075], [718, 1075], [729, 1198], [740, 1075], [798, 1075], [806, 1198], [858, 1198], [868, 1075], [875, 1198], [915, 1198], [925, 1075], [932, 1198], [955, 1198], [965, 1075], [972, 1198], [995, 1198], [1003, 1075], [1012, 1198], [1033, 1198], [1042, 1075], [1082, 1075], [1092, 1198]])} fill="none" stroke="#ff7f00" strokeWidth="2.2" />
      <Flag x={637} y0={107} y1={121} w={134} bg="#000" t="1.33512" fg="#e0e000" />
      <rect x={637} y={118} width={134} height={3} fill="#e81010" />
      <Flag x={637} y0={124} y1={147} w={134} bg="#855600" t="1.33504" />
      <Flag x={637} y0={435} y1={456} w={134} bg="#7ac800" t="1.00000" fg="#1a3a00" />
      <Flag x={637} y0={676} y1={698} w={134} bg="#ff7f00" t="-1.00000" fg="#3a1a00" />
      <g>
        <rect x="3" y="26" width="85" height="72" fill="#f0f0f0" stroke="#bbb" strokeWidth="2" />
        <rect x="16" y="33" width="60" height="58" rx="5" fill="#3a3a3a" />
        <rect x="21" y="38" width="44" height="32" fill="#8a8a8a" stroke="#ddd" />
        <path d="M25 58l10-6 8 2 10-8" stroke="#8dd88d" fill="none" />
        <circle cx="61" cy="44" r="7" fill="#fff" />
        <path d="M36 88v-8l8-3h10l3-11h10v22z" fill="#dcdcdc" />
        <text x="50" y="85" fontSize="6" fill="#555" fontFamily="Liberation Sans">EA</text>
      </g>
      <Ax x={60} y={741} w={161} t="04:30:00 PM" fill="#7fd4d4" />
      <Ax x={5} y={760} w={179} t="May. 23, 2018" fill="#7fd4d4" />
      <Ax x={374} y={741} w={161} t="05:30:00 PM" fill="#7fd4d4" />
    </svg>
  );
};

const RC: Cd[] = [
  [697, 1160, 1385, 1225, 1355, 1], [705, 1160, 1310, 1258, 1265, 0], [715, 1165, 1345, 1228, 1262, 1], [724, 1230, 1455, 1230, 1403, 0], [736, 1180, 1403, 1200, 1403, 1], [748, 1090, 1260, 1185, 1195, 1], [757, 960, 1190, 965, 1185, 1], [767, 848, 990, 925, 968, 1], [776, 880, 990, 908, 925, 1], [789, 815, 925, 843, 905, 1], [797, 830, 880, 845, 850, 0], [808, 810, 880, 850, 856, 0], [820, 830, 880, 852, 862, 0], [830, 790, 890, 855, 872, 0], [842, 800, 895, 870, 878, 1], [851, 655, 900, 655, 878, 1], [861, 535, 610, 558, 655, 1], [870, 540, 612, 562, 598, 0], [882, 490, 605, 493, 565, 1], [892, 310, 495, 342, 492, 1], [902, 270, 400, 342, 395, 0], [912, 270, 440, 365, 395, 1], [923, 240, 400, 250, 365, 1], [933, 125, 265, 155, 250, 1], [944, 78, 205, 155, 198, 0], [956, 170, 565, 198, 410, 0], [965, 140, 490, 375, 410, 1], [977, 245, 400, 302, 375, 1], [987, 230, 510, 300, 305, 1], [997, 230, 370, 302, 365, 0], [1006, 310, 710, 365, 670, 0], [1017, 660, 793, 700, 745, 0], [1027, 583, 783, 700, 745, 1], [1040, 665, 757, 675, 693, 1],
];

const RightChart = () => {
  const fx = (z: number) => z / 1.96 - 4;
  const y6 = (z: number) => z / 1.704 - 42;
  const y7 = (z: number) => z / 1.706 + 868;
  const m6 = (l: P[]) => poly(l.map((p) => [fx(p[0]), y6(p[1])] as P));
  const m7 = (l: P[]) => poly(l.map((p) => [fx(p[0]), y7(p[1])] as P));
  const w = 636;
  const tops: number[] = [8, 14, 24, 30, 36, 42, 46, 50, 56, 90, 97, 162, 173, 180, 214, 225, 235, 424, 433, 443, 454, 465, 758, 767, 998, 1006, 1038];
  const hi = [1, 0, 1, 1, 0, 0, 1, 1, 0, 0, 1, 1, 0, 1, 1, 0, 1, 1, 0, 1, 1, 0, 0, 1, 1, 0, 0];
  const gr = tops.map((x, i) => [x, hi[i] ? 74 : 425] as P);
  const or = tops.map((x, i) => [x, hi[i] ? 1072 : 811] as P);
  const labels: [string, number][] = [
    ["1.29100", 217], ["1.29000", 263], ["1.28900", 310], ["1.28800", 357], ["1.28700", 405], ["1.28600", 451], ["1.28300", 592], ["1.28200", 638], ["1.28100", 685], ["1.28000", 732], ["1.27900", 780], ["1.27800", 826], ["1.27700", 873], ["1.27600", 919], ["1.27500", 967], ["1.25000", 1048], ["1.00000", 1101], ["0.75000", 1153], ["0.50000", 1205], ["0.25000", 1256], ["0.00000", 1306], ["-0.25000", 1362], ["0.40000", 1471], ["0.00000", 1530], ["-0.40000", 1596], ["-0.80000", 1658], ["-1.20000", 1721], ["-1.60000", 1782],
  ];
  const gridY = [219, 265, 312, 358, 406, 453, 499, 546, 593, 640, 687, 734, 781, 828, 875, 921, 969, 1050, 1103, 1155, 1207, 1258, 1311, 1364, 1473, 1534, 1598, 1660, 1723, 1784];
  return (
    <svg width="771" height="1677" className="block">
      <defs>
        <linearGradient id="pr" x1="0" y1="0" x2="0" y2="1"><stop offset="0" stopColor="#1f1f1f" /><stop offset="1" stopColor="#141414" /></linearGradient>
      </defs>
      <rect width="771" height="1677" fill="#1e1e1e" />
      <rect width={w} height="812" fill="url(#pr)" />
      <rect y="812" width={w} height="405" fill="url(#pr)" />
      <rect y="1217" width={w} height="404" fill="url(#pr)" />
      <rect x={w} width="135" height="1621" fill="#151515" />
      <line x1="0" x2={w} y1="812" y2="812" stroke="#3a3a3a" />
      <line x1="0" x2={w} y1="1217" y2="1217" stroke="#3a3a3a" />
      <line x1="0" x2="771" y1="1621" y2="1621" stroke="#3a3a3a" />
      <line x1={w + 1} x2={w + 1} y1="0" y2="1621" stroke="#000" strokeWidth="1.5" />
      <HGrid ys={gridY.map((y) => y - 192)} w={w} />
      {[2028, 2118, 2273, 2394].map((x) => (
        <line key={x} x1={x - 1954} x2={x - 1954} y1="0" y2="1621" stroke="#555" strokeDasharray="4 5" />
      ))}
      {labels.map((a, i) => (
        <Ax key={i} x={a[0][0] === "-" ? 649 : a[0][0] === "1" ? 656 : 654} y={a[1] - 192} w={a[0][0] === "-" ? 114 : a[0][0] === "1" ? 102 : 105} t={a[0]} />
      ))}
      <Candles d={RC} fx={fx} fy={y6} />
      <polyline points={m6([[697, 882], [720, 920], [745, 942], [770, 945], [800, 935], [845, 922], [870, 895], [900, 845], [930, 790], [955, 745], [985, 705], [1000, 693], [1040, 693]])} fill="none" stroke="#8a5a00" strokeWidth="3" />
      <polyline points={m6([[697, 965], [725, 1015], [750, 1037], [790, 1005], [815, 985], [850, 965], [870, 900], [900, 830], [930, 740], [960, 680], [985, 625], [1000, 615], [1038, 632]])} fill="none" stroke="#7b0018" strokeWidth="3.5" />
      <polyline points={m6([[697, 1080], [720, 1120], [748, 1145], [770, 1100], [800, 1040], [845, 985], [870, 890], [900, 780], [925, 660], [945, 600], [970, 550], [998, 508], [1015, 525], [1038, 563]])} fill="none" stroke="#ff0000" strokeWidth="4" strokeDasharray="9 1.5" />
      <polyline points={m7(gr)} fill="none" stroke="#7ac800" strokeWidth="2.2" />
      <polyline points={m7(or)} fill="none" stroke="#ff7f00" strokeWidth="2.2" />
      <Flag x={638} y0={288} y1={311} w={133} bg="#ff0a0a" t="1.28540" />
      <Flag x={638} y0={328} y1={349} w={133} bg="#7b0018" t="1.28457" />
      <Flag x={638} y0={351} y1={364} w={133} bg="#000" t="1.28404" fg="#e0e000" />
      <Flag x={638} y0={364} y1={386} w={133} bg="#855600" t="1.28380" />
      <Flag x={638} y0={1119} y1={1141} w={133} bg="#7ac800" t="0.00000" fg="#1a3a00" />
      <Flag x={638} y0={1342} y1={1364} w={133} bg="#ff7f00" t="-0.00000" fg="#3a1a00" />
      <Ax x={58} y={1637} w={30} t="18" fill="#7fd4d4" />
      <Ax x={149} y={1637} w={32} t="20" fill="#7fd4d4" />
      <Ax x={303} y={1637} w={32} t="22" fill="#7fd4d4" />
      <Ax x={424} y={1637} w={32} t="23" fill="#7fd4d4" />
      <Ax x={5} y={1655} w={130} t="May. 2018" fill="#7fd4d4" />
    </svg>
  );
};

export default function App() {
  return (
    <div className="relative w-[3840px] h-[1979px] overflow-hidden bg-[#2d2d30] flex flex-col font-['Open_Sans',sans-serif] text-[15px] text-[#e0e0e0]">
      <div className="h-[3px] bg-[#111] border-b border-[#666] shrink-0" />
      <div className="h-[54px] flex items-center shrink-0">
        <div className="ml-[5px]"><Logo s={40} /></div>
        <span className="ml-[15px] text-[24px] text-[#e8e8e8]">S-Trader</span>
        <div className="flex-1" />
        <Minus size={26} strokeWidth={1.5} className="mr-[26px] text-white" />
        <Copy size={20} strokeWidth={1.5} className="mr-[28px] text-white" />
        <X size={24} strokeWidth={1.5} className="mr-[7px] text-white" />
      </div>
      <div className="h-[41px] flex items-start gap-[6px] pl-[5px] pt-[3px] shrink-0 font-semibold text-[16px] relative">
        <Tab t="Quote Lists" c="w-[128px] h-[33px] bg-[#0b9a6a] pl-[3px] gap-[3px]" icon={<Table size={28} strokeWidth={1.2} className="text-[#cfeedd]" />} />
        <Tab t="Status Panel" c="w-[132px] h-[33px] bg-[#0078d0] pl-[3px] gap-[3px]" icon={<Monitor size={28} strokeWidth={2} />} />
        <Tab t="My Blotter" c="w-[111px] h-[33px] bg-[#0078d0] pl-[2px] gap-[3px] font-normal" icon={<ClipboardCheck size={26} strokeWidth={2.2} />} />
        <Tab t="Scheduler" c="w-[112px] h-[33px] bg-[#0078d0] pl-[2px] gap-[3px] font-normal" icon={<CalendarClock size={28} strokeWidth={1.4} />} />
        <div className="flex-1" />
        <div className="mt-[8px]"><Tri /></div>
        <X size={22} strokeWidth={1.5} className="mt-[5px] mr-[2px] ml-[6px] text-white" />
      </div>
      <div className="h-[3px] bg-[#007acc] shrink-0" />
      <div className="h-[43px] flex items-start pl-[10px] pt-[6px] shrink-0">
        <Tab t="Quote List" c="w-[116px] h-[33px] bg-[#0b9a6a] pl-[3px] gap-[3px]" icon={<span className="font-bold text-[33px] leading-none">iQ</span>} />
        <div className="flex-1" />
        <div className="mt-[8px]"><Tri /></div>
        <X size={22} strokeWidth={1.5} className="mt-[5px] mr-[18px] ml-[6px] text-white" />
      </div>
      <div className="h-[3px] ml-[8px] mr-[6px] bg-[#007acc] shrink-0" />

      <div className="flex-1 flex min-h-0">
        <div className="w-[57px] pl-[13px] pt-[5px] shrink-0">
          <div className="h-[1786px] w-[43px] bg-[#808080] flex flex-col gap-[5px]">
            <div className="w-[33px] h-[169px] bg-black text-white flex items-center justify-start pt-[7px] [writing-mode:vertical-rl] text-[16.5px] font-['DejaVu_Sans',sans-serif]">Instrument Panel</div>
            <div className="w-[33px] h-[72px] bg-black text-white flex items-center justify-start pt-[6px] [writing-mode:vertical-rl] text-[16.5px] font-['DejaVu_Sans',sans-serif]">Watch</div>
          </div>
        </div>

        <div className="w-[1888px] flex flex-col shrink-0">
          <div className="h-[901px] flex flex-col shrink-0">
            <div className="h-[41px] shrink-0" />
            <div className="h-[797px] ml-[4px] w-[785px] bg-[#1a1a1a] border-[4px] border-[#808080] border-l-[5px] border-r-[8px] shrink-0 flex">
              <svg width="771" height="789" className="block">
                <rect x="769" y="141" width="2" height="29" fill="#7b0018" />
                <rect x="769" y="175" width="2" height="16" fill="#855600" />
                <rect x="769" y="403" width="2" height="22" fill="#7ac800" />
                <rect x="769" y="683" width="2" height="22" fill="#ff7f00" />
              </svg>
            </div>
            <ChartBar c="ml-[4px] w-[785px]" />
            <div className="h-[3px] bg-[#007acc] shrink-0" />
            <div className="flex gap-[6px] pt-[2px] text-[18px] font-semibold shrink-0">
              <Tab t="EURUSD.FXCM 1 Min" c="w-[183px] h-[23px] bg-[#0078d0] justify-center" />
              <Tab t="EURUSD.FXCM 10 Min" c="w-[195px] h-[23px] bg-[#0078d0] justify-center" />
              <Tab t="EURUSD.FXCM 1 Hour" c="w-[194px] h-[23px] bg-[#0078d0] justify-center" />
            </div>
          </div>

          <div className="h-[902px] flex flex-col shrink-0">
            <div className="h-[29px] w-[1883px] bg-[#007acc] flex items-center justify-between pl-[3px] pr-[8px] shrink-0 text-[#e0eef8] text-[16px]">
              <span>GBPUSD.FXCM 1 Min</span>
              <span className="flex items-center gap-[6px]"><Pin size={15} className="text-white" /><X size={16} className="text-white" /></span>
            </div>
            <div className="flex pt-[6px] h-[821px] shrink-0">
              <div className="w-[779px] ml-[4px] flex flex-col shrink-0">
                <div className="border-t-[4px] border-b-[4px] border-l-[5px] border-r-[3px] border-[#808080] h-[790px] shrink-0">
                  <LeftChart />
                </div>
                <ChartBar c="" />
              </div>
              <div className="w-[1100px] h-[815px] bg-[#808080] flex pl-[6px] pt-[3px] gap-[8px] shrink-0">
                <Gauge c="h-[807px]" angle={-11.3} cy={251} v="150" l1="The 'FILTER TREND' expert advisor generated 72 bullish" l2="signals and 78 bearish signals within the previous 150 bars:" rows={LEFT_SIGNALS} boxH="h-[308px]" thumb="h-[26px] mt-[4px]" />
                <Trade c="mt-[1px] h-[806px]" s1="GBPUSD.FXCM" s2="GBP.USD" a="1.33" b1="51" d1="2" b2="58" d2="4" />
              </div>
            </div>
            <div className="h-[3px] mt-[2px] w-[1881px] bg-[#007acc] shrink-0" />
            <div className="flex items-start gap-[6px] pt-[1px] shrink-0 text-[16px]">
              <Tab t="GBPUSD.FXCM 1 Min" c="ml-[1px] w-[169px] h-[24px] bg-[#0b9a6a] justify-center text-[#d8f0e4]" />
              <Tab t="GBPUSD.FXCM 10 Min" c="w-[195px] h-[24px] bg-[#0078d0] justify-center font-semibold text-[17px]" />
              <Tab t="GBPUSD.FXCM 1 Hour" c="w-[194px] h-[24px] bg-[#0078d0] justify-center font-semibold text-[17px]" />
            </div>
          </div>
        </div>

        <div className="w-[1895px] flex flex-col shrink-0">
          <div className="h-[41px] flex items-center justify-end shrink-0 gap-[10px] pr-[14px] pt-[2px]">
            <Pin size={17} className="text-white" />
            <X size={22} strokeWidth={1.5} className="text-white" />
          </div>
          <div className="flex h-[1710px] shrink-0">
            <div className="ml-[5px] w-[775px] flex flex-col shrink-0">
              <div className="border-y-[4px] border-l-[4px] border-[#808080] h-[1685px] shrink-0">
                <RightChart />
              </div>
              <ChartBar c="" />
            </div>
            <div className="w-[1097px] h-[1710px] bg-[#808080] flex pl-[10px] pt-[4px] gap-[8px] shrink-0">
              <Gauge c="h-[1701px] w-[579px]" angle={52.7} cy={248} v="100" l1="The 'FILTER TREND' expert advisor generated 62 bullish" l2="signals and 38 bearish signals within the previous 100 bars:" rows={RIGHT_SIGNALS} boxH="h-[1199px]" thumb="h-[667px]" />
              <Trade c="h-[1701px]" s1="USDCAD.FXCM" s2="USD.CAD" a="1.28" b1="40" d1="4" b2="42" d2="4" stop />
            </div>
          </div>
          <div className="h-[3px] mt-[2px] bg-[#007acc] mr-[10px] shrink-0" />
          <div className="flex items-start gap-[6px] pt-[3px] shrink-0 text-[17px]">
            <Tab t="USDCAD.FXCM 1 Hour" c="w-[192px] h-[27px] bg-[#0078d0] justify-center font-semibold" />
            <Tab t="USDCAD.FXCM 1 Min" c="w-[171px] h-[27px] bg-[#0078d0] justify-center text-[16px] text-[#d8e8f8]" />
            <Tab t="USDCAD.FXCM 10 Min" c="w-[195px] h-[27px] bg-[#0078d0] justify-center font-semibold" />
          </div>
        </div>
      </div>

      <div className="h-[27px] bg-[#007acc] shrink-0" />
      <div className="h-[2px] bg-[#111] shrink-0" />

      <Advisors />
      <Dialog />

      <div className="absolute left-[3315px] top-[1823px] w-[525px] h-[154px] bg-[#1b1b1b] border border-[#0669b0] flex flex-col">
        <div className="h-[16px] bg-[#0669b0] flex items-center justify-center shrink-0">
          <div className="w-[60px] h-[7px] bg-[radial-gradient(#5aa0d8_1px,transparent_1px)] bg-[length:4px_4px]" />
        </div>
        <div className="relative flex-1 flex flex-col">
          <div className="ml-[8px] mt-[4px] h-[38px] text-[26px] text-[#e4e4e4] whitespace-nowrap leading-[38px]">EA: <b>FILTER TREND</b> on GBPUSD.FXCM</div>
          <div className="ml-[8px] mt-[3px] text-[18px] font-['Liberation_Sans',sans-serif] text-[#e4e4e4]">At 5/23/2018 5:43:05 PM</div>
          <div className="ml-[13px] mt-[21px] text-[18px] font-['Liberation_Sans',sans-serif] text-[#e4e4e4]">NO MESSAGE</div>
          <div className="absolute top-[11px] right-[10px] flex items-center gap-[20px]">
            <Pin size={18} className="rotate-90 text-white" />
            <X size={20} className="text-white" />
          </div>
          <div className="absolute top-[15px] left-[429px]"><Tri /></div>
        </div>
        <div className="h-[25px] flex justify-end text-[16px] text-[#555] shrink-0 bg-[#17283c]">
          <div className="w-[83px] bg-[#123a46] flex items-center justify-center">68</div>
          <div className="w-[82px] bg-[#2a1a1a] flex items-center justify-center">0</div>
          <div className="w-[83px] bg-[#3c1a26] flex items-center justify-center">0</div>
          <div className="w-[81px] bg-[#14233a] flex items-center justify-center">0</div>
        </div>
      </div>
    </div>
  );
}
